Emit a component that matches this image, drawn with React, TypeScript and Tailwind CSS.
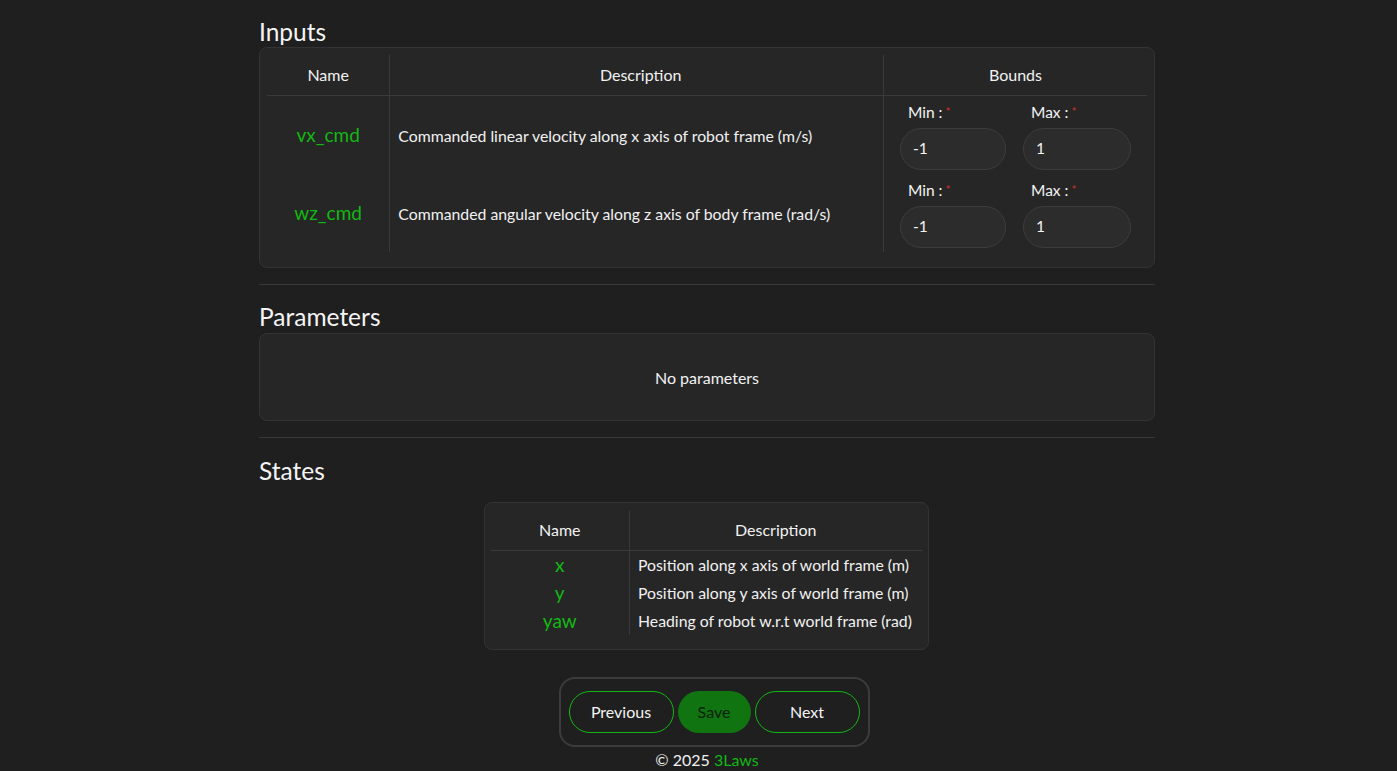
import React from "react";

const green = "text-[#12b812]";

function BoundField({ label, value }: { label: string; value: string }) {
  return (
    <div className="flex flex-col">
      <div className="h-6 leading-6 mb-1 pl-2 text-[15.5px] text-[#f4f4f4]">
        {label} :<span className="text-[#c8302f] text-[12px] align-top ml-[3px]">*</span>
      </div>
      <div className="h-[42px] rounded-full bg-[#2c2c2c] border border-[#3c3c3c] flex items-center px-3 text-[15.5px] text-[#f4f4f4]">
        {value}
      </div>
    </div>
  );
}

export default function App() {
  const inputs = [
    { name: "vx_cmd", desc: "Commanded linear velocity along x axis of robot frame (m/s)" },
    { name: "wz_cmd", desc: "Commanded angular velocity along z axis of body frame (rad/s)" },
  ];
  const states = [
    { name: "x", desc: "Position along x axis of world frame (m)" },
    { name: "y", desc: "Position along y axis of world frame (m)" },
    { name: "yaw", desc: "Heading of robot w.r.t world frame (rad)" },
  ];
  return (
    <div
      className="min-h-[771px] bg-[#1f1f1f] text-[#f2f2f2] pl-[17px]"
      style={{ fontFamily: "Lato, 'Noto Sans', sans-serif" }}
    >
      <div className="w-[896px] mx-auto pt-4 flex flex-col">
        {/* Inputs */}
        <h2 className="text-[24.5px] leading-[31px] text-[#f4f4f4]">Inputs</h2>
        <div className="bg-[#262626] border border-[#333333] rounded-lg px-[7px] pt-[7px] pb-[15px]">
          <table className="w-full border-collapse">
            <thead>
              <tr className="h-10 border-b border-[#3a3a3a]">
                <th className="w-[123px] font-normal text-[16px] border-r border-[#3a3a3a]">Name</th>
                <th className="w-[495px] pl-2 font-normal text-[16px] border-r border-[#3a3a3a]">Description</th>
                <th className="font-normal text-[16px]">Bounds</th>
              </tr>
            </thead>
            <tbody>
              {inputs.map((r) => (
                <tr key={r.name} className="h-[78px]">
                  <td className={`text-center text-[19px] pt-[2px] ${green} border-r border-[#3a3a3a]`}>{r.name}</td>
                  <td className="pl-2 text-[15.8px] pt-[2px] text-[#f2f2f2] border-r border-[#3a3a3a]">{r.desc}</td>
                  <td className="pl-[16px] pr-4 pt-1 pb-1 align-top">
                    <div className="grid grid-cols-[106px_108px] gap-x-[17px]">
                      <BoundField label="Min" value="-1" />
                      <BoundField label="Max" value="1" />
                    </div>
                  </td>
                </tr>
              ))}
            </tbody>
          </table>
        </div>

        <div className="h-px bg-[#383838] mt-4" />

        {/* Parameters */}
        <h2 className="text-[24.5px] leading-[32px] text-[#f4f4f4] mt-4">Parameters</h2>
        <div className="bg-[#262626] border border-[#333333] rounded-lg h-[88px] flex items-center justify-center text-[16px] pt-[2px]">
          No parameters
        </div>

        <div className="h-px bg-[#383838] mt-4" />

        {/* States */}
        <h2 className="text-[24.5px] leading-[32px] text-[#f4f4f4] mt-[17px]">States</h2>
        <div className="self-center mr-[2px] mt-[15px] w-[445px] bg-[#262626] border border-[#333333] rounded-lg px-[6px] pt-[8px] pb-[14px]">
          <table className="w-full border-collapse">
            <thead>
              <tr className="h-10 border-b border-[#3a3a3a]">
                <th className="w-[139px] font-normal text-[16px] border-r border-[#3a3a3a]">Name</th>
                <th className="font-normal text-[16px]">Description</th>
              </tr>
            </thead>
            <tbody>
              {states.map((r) => (
                <tr key={r.name} className="h-7">
                  <td className={`text-center text-[19px] leading-7 ${green} border-r border-[#3a3a3a]`}>{r.name}</td>
                  <td className="pl-2 text-[15.8px] leading-7 whitespace-nowrap">{r.desc}</td>
                </tr>
              ))}
            </tbody>
          </table>
        </div>

        {/* Buttons */}
        <div className="self-center ml-[14px] mt-[27px] border-2 border-[#3c3c3c] rounded-2xl px-2 py-3 flex gap-1">
          <button className="w-[105px] h-[42px] rounded-full border border-[#12b812] text-[16px] text-[#f4f4f4]">
            Previous
          </button>
          <button className="w-[73px] h-[42px] rounded-full bg-[#107510] text-[16px] text-[#0a200a]">
            Save
          </button>
          <button className="w-[105px] h-[42px] rounded-full border border-[#12b812] text-[16px] text-[#f4f4f4]">
            Next
          </button>
        </div>
        <div className="self-center text-[16px] leading-5 mt-[3px]">
          © 2025 <span className={green}>3Laws</span>
        </div>
      </div>
    </div>
  );
}
